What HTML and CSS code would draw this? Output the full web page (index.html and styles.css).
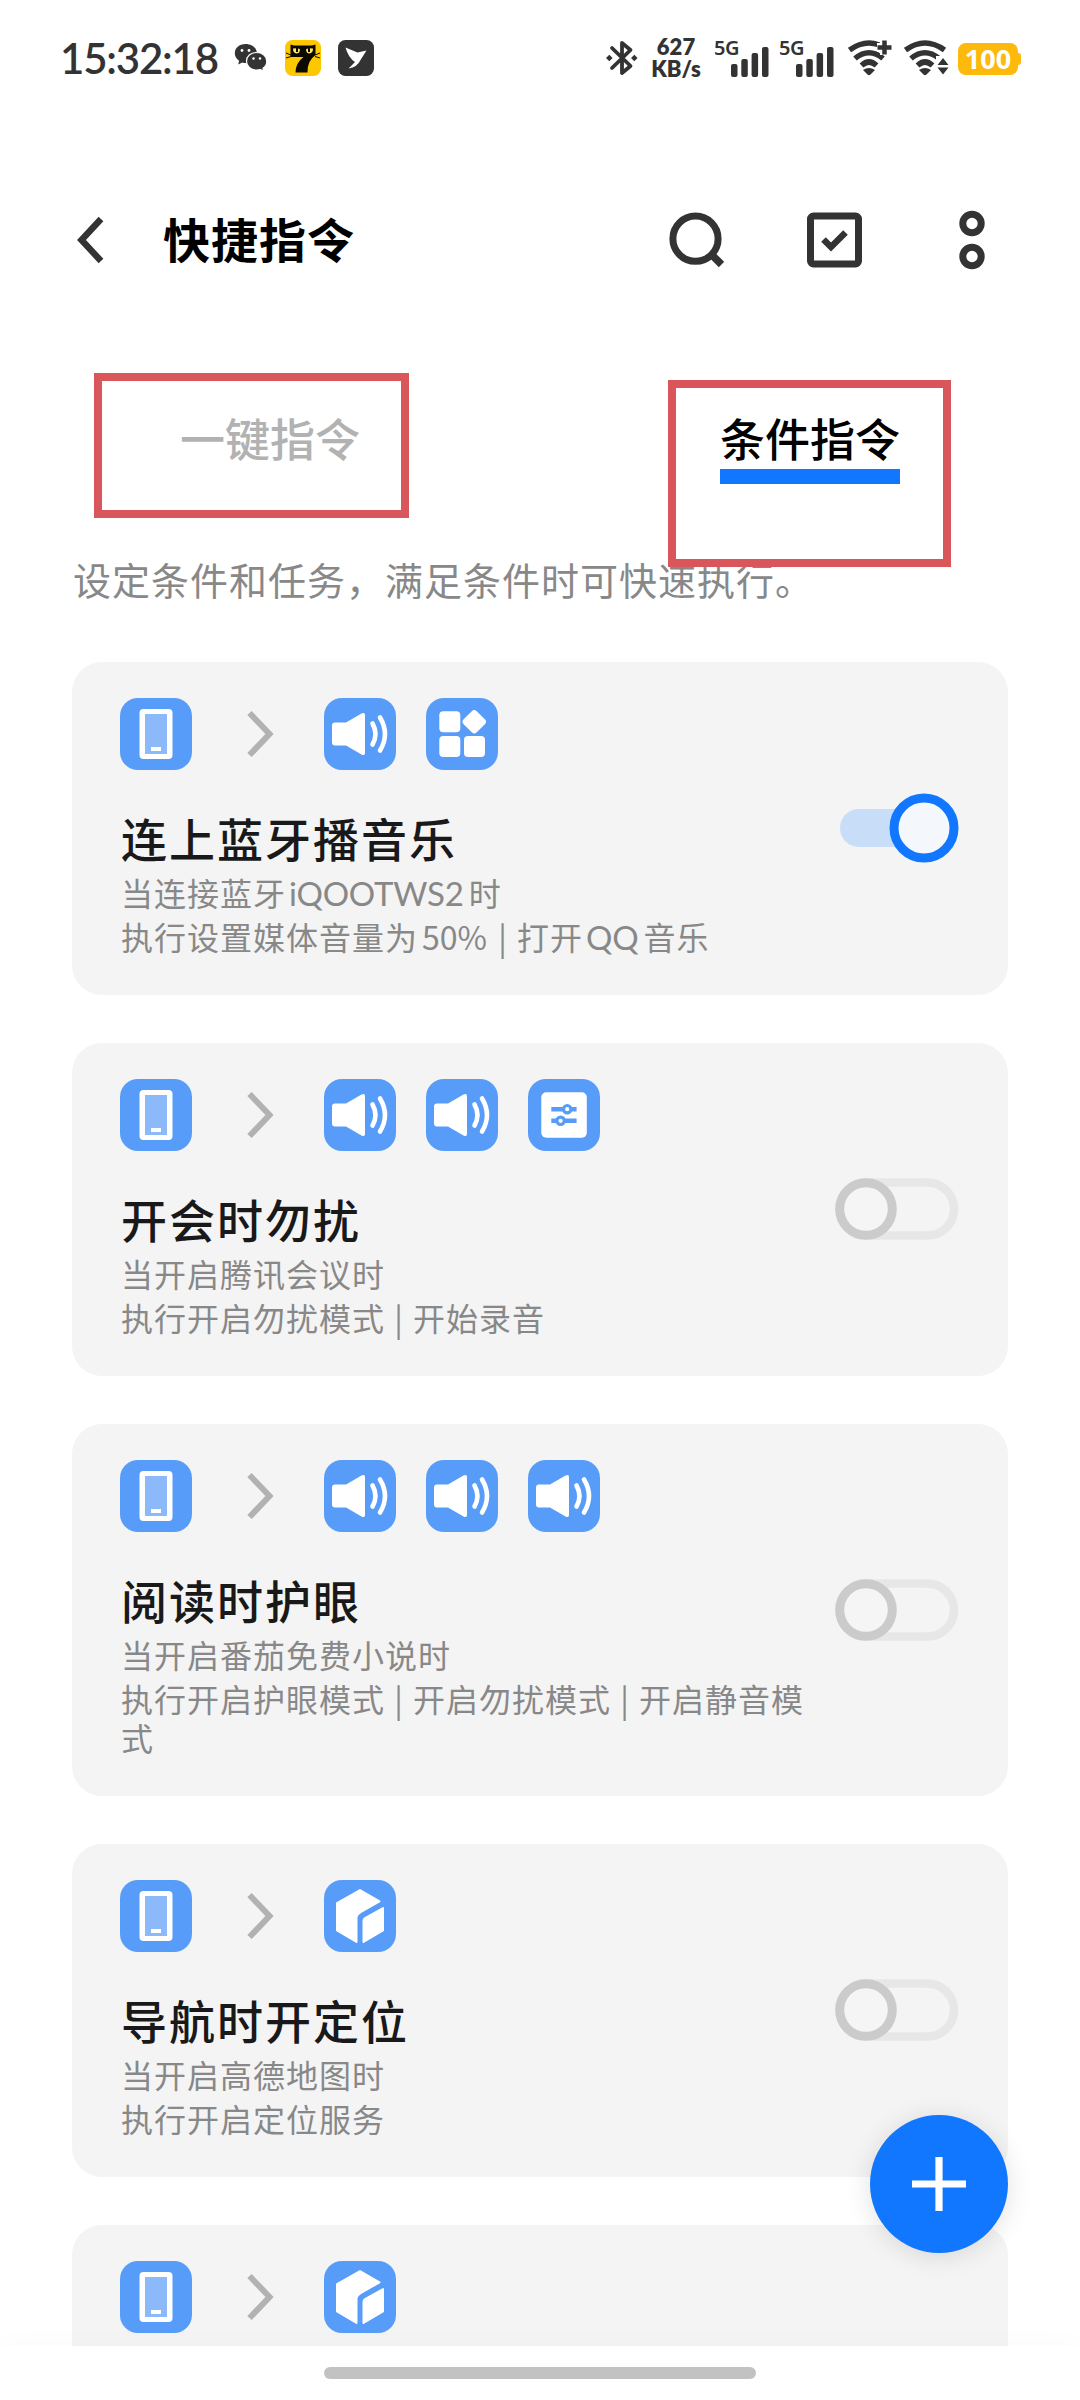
FILE: index.html
```html
<!DOCTYPE html>
<html lang="zh-CN">
<head>
<meta charset="utf-8">
<title>快捷指令</title>
<link rel="stylesheet" href="styles.css">
</head>
<body>
<svg class="defs" width="0" height="0" aria-hidden="true">
  <symbol id="phone" viewBox="0 0 72 72">
    <rect x="19.500" y="11" width="33" height="50" rx="4" fill="#fff"/>
    <rect x="25" y="16" width="22" height="40" fill="#8bb9fa"/>
    <rect x="31" y="49" width="10" height="4" fill="#fff"/>
  </symbol>
  <symbol id="arrow" viewBox="0 0 28 48">
    <path d="M3.500 3 23.500 24 3.500 45" fill="none" stroke="#b2b2b2" stroke-width="6"/>
  </symbol>
  <symbol id="speaker" viewBox="0 0 72 72">
    <path d="M11 24.500H22L37.500 15.500Q41 13.800 41 17V55Q41 58.200 37.500 56.500L22 47.500H11Q8 47.500 8 44.500V27.500Q8 24.500 11 24.500Z" fill="#fff"/>
    <path d="M48.500 25.500Q54.500 36 48.500 46.500M56 19.500Q66 36 56 52.500" fill="none" stroke="#fff" stroke-width="4.600" stroke-linecap="round"/>
  </symbol>
  <symbol id="apps" viewBox="0 0 72 72">
    <g fill="#fff"><rect x="13.300" y="13.300" width="21" height="21" rx="4"/><rect x="13.300" y="38" width="21" height="21" rx="4"/><rect x="38" y="38" width="21" height="21" rx="4"/><rect x="39" y="14.500" width="18.500" height="18.500" rx="3.500" transform="rotate(45 48.250 23.750)"/></g>
  </symbol>
  <symbol id="sliders" viewBox="0 0 72 72">
    <rect x="13.300" y="13.300" width="45.500" height="45.500" rx="5" fill="#fff"/>
    <path d="M23.300 30.200H48.600M23.300 41.800H48.600" stroke="#589cf9" stroke-width="4.400"/>
    <circle cx="39.200" cy="30.200" r="3.700" fill="#fff" stroke="#589cf9" stroke-width="3.200"/><circle cx="32.600" cy="41.800" r="3.700" fill="#fff" stroke="#589cf9" stroke-width="3.200"/>
  </symbol>
  <symbol id="box" viewBox="0 0 72 72">
    <g fill="#fff" stroke="#fff" stroke-width="2" stroke-linejoin="round"><path d="M36 10 55.500 21.300 37 32Q32.500 34.500 32.500 38V62L13 50.500V23Z"/><path d="M59 28V50.500L39.500 62V41Q39.500 39 41 38Z"/></g>
  </symbol>
  <symbol id="off" viewBox="0 0 124 70">
    <rect x="4.500" y="8.500" width="114.500" height="53" rx="26.500" fill="none" stroke="#e7e7e7" stroke-width="8.500"/>
    <circle cx="31" cy="35" r="26.300" fill="#f5f5f5" stroke="#cbcbcb" stroke-width="9"/>
  </symbol>
  <symbol id="on" viewBox="0 0 124 70">
    <rect x="5" y="16" width="110" height="38" rx="19" fill="#c8ddf7"/>
    <circle cx="89" cy="35" r="30" fill="#f4f8fd" stroke="#1177ff" stroke-width="9"/>
  </symbol>
  <symbol id="signal" viewBox="0 0 38 30">
    <g fill="#333"><rect x="0" y="17" width="6.500" height="13" rx="2"/><rect x="10.300" y="12" width="6.500" height="18" rx="2"/><rect x="20.600" y="6" width="6.500" height="24" rx="2"/><rect x="31" y="0" width="6.500" height="30" rx="2"/></g>
  </symbol>
  <symbol id="wifi" viewBox="0 0 44 36">
    <path d="M1.500 10Q21 -4 40.500 10M7 18.500Q21 7 35 18.500M13.500 25.500Q21 18.500 28.500 25.500" fill="none" stroke="#333" stroke-width="5.500"/>
    <path d="M15 30Q21 26 27 30L22.500 34.500Q21 36 19.500 34.500Z" fill="#333"/>
  </symbol>
</svg>

<div class="status">
  <span class="clock">15:32:18</span>
  <svg class="wechat" width="34" height="30" viewBox="0 0 34 30">
    <path d="M11.500 1C5.200 1 .8 5 .8 10.300c0 3.200 1.700 5.700 4.300 7.400L4.200 21.500 8.300 19.500Q10 20 12 20C18.500 20 23 16 23 10.500S18 1 11.500 1Z" fill="#333"/>
    <path d="M22.500 9.500C16.500 9.500 12.500 13.300 12.500 18.300S16.700 27 22.500 27Q24.500 27 26.200 26.500L29.700 28.300 29 25.200C31.500 23.600 32.800 21.200 32.800 18.300 32.800 13.300 28.500 9.500 22.500 9.500Z" fill="#333" stroke="#fff" stroke-width="1.200"/>
    <g fill="#fff"><circle cx="8" cy="7.500" r="1.400"/><circle cx="15" cy="7.500" r="1.400"/><circle cx="19.500" cy="15.500" r="1.200"/><circle cx="26" cy="15.500" r="1.200"/></g>
  </svg>
  <svg class="cat" width="36" height="36" viewBox="0 0 36 36">
    <rect width="36" height="36" rx="7.500" fill="#fdc800"/>
    <path d="M5.500 4.500 9 5.500H27L30.500 4.500V15Q22 21 22.500 32.500H10.500Q10.500 23 18.500 17H5.500Z" fill="#0b0900"/>
    <path d="M1 13 6 15M1 18 6 16.500M35 13 30 15M35 18 30 16.500" stroke="#0b0900"/>
    <path d="M8 8.500Q15 7.500 15 10 14.500 13.500 11.500 13.500 8 13 8 8.500ZM28 8.500Q21 7.500 21 10 21.500 13.500 24.500 13.500 28 13 28 8.500Z" fill="#ffe36a"/>
    <path d="M12 8V12M24 8V12" stroke="#0b0900" stroke-width="2"/>
  </svg>
  <svg class="bird" width="36" height="36" viewBox="0 0 36 36">
    <rect width="36" height="36" rx="7.500" fill="#333"/>
    <path d="M7.500 7.500 19.500 12.500 28.500 10.500 22.500 20Q19.500 27 10.500 28.500L17 22Q10.500 18 7.500 7.500Z" fill="#fff"/>
  </svg>
  <svg class="bluetooth" width="32" height="36" viewBox="0 0 32 36">
    <path d="M6 8 24.500 26 16 33V3L24.500 10 6 28" fill="none" stroke="#333" stroke-width="3.800" stroke-linejoin="round" stroke-linecap="round"/>
    <path d="M0 18 3.300 14.700 6.600 18 3.300 21.300ZM25 18 28.300 14.700 31.600 18 28.300 21.300Z" fill="#333"/>
  </svg>
  <div class="speed"><span>627</span><span>KB/s</span></div>
  <div class="cell"><span>5G</span><svg width="38" height="30"><use href="#signal"/></svg></div>
  <div class="cell"><span>5G</span><svg width="38" height="30"><use href="#signal"/></svg></div>
  <svg class="wifi-plus" width="44" height="36" viewBox="0 0 44 36">
    <use href="#wifi" width="44" height="36"/>
    <path d="M36.500 0V15M29 7.500H44" stroke="#fff" stroke-width="9"/>
    <path d="M36.500 .5V14.500M29.500 7.500H43.500" stroke="#333" stroke-width="4.500"/>
  </svg>
  <svg class="wifi-data" width="46" height="36" viewBox="0 0 46 36">
    <use href="#wifi" width="44" height="36"/>
    <path d="M32 16H46V36H32Z" fill="#fff"/>
    <path d="M39 18 44.500 25H33.500ZM39 34.500 44.500 27.500H33.500Z" fill="#333"/>
  </svg>
  <div class="battery">100</div>
</div>

<header class="header">
  <svg class="back" width="30" height="50" viewBox="0 0 30 50"><path d="M25 4 5.500 25 25 46" fill="none" stroke="#333" stroke-width="6.500"/></svg>
  <h1>快捷指令</h1>
  <div class="actions">
    <svg width="60" height="60" viewBox="0 0 60 60"><circle cx="30.500" cy="28.700" r="22.600" fill="none" stroke="#333" stroke-width="7"/><path d="M45 43 56.500 54.500" stroke="#333" stroke-width="7.500"/></svg>
    <svg width="60" height="60" viewBox="0 0 60 60"><rect x="6.500" y="6" width="48" height="48" rx="3" fill="none" stroke="#333" stroke-width="7"/><path d="M19.500 29.500 27 37 41.500 22.500" fill="none" stroke="#333" stroke-width="6.500"/></svg>
    <svg width="60" height="60" viewBox="0 0 60 60"><g fill="none" stroke="#333" stroke-width="7"><circle cx="30" cy="13.500" r="9.200"/><circle cx="30" cy="46.500" r="9.200"/></g></svg>
  </div>
</header>

<nav class="tabs">
  <span class="tab">一键指令</span>
  <span class="tab active">条件指令</span>
</nav>
<p class="hint">设定条件和任务，满足条件时可快速执行。</p>
<div class="mark mark-left"></div>
<div class="mark mark-right"></div>

<main class="list">
  <section class="card">
    <div class="body">
      <div class="flow"><svg class="tile"><use href="#phone"/></svg><svg class="arrow"><use href="#arrow"/></svg><svg class="tile"><use href="#speaker"/></svg><svg class="tile"><use href="#apps"/></svg></div>
      <h2>连上蓝牙播音乐</h2>
      <p>当连接蓝牙<span class="latin">iQOOTWS2</span>时</p>
      <p>执行设置媒体音量为<span class="num">50%</span> | 打开<span class="latin">QQ</span>音乐</p>
    </div>
    <svg class="toggle"><use href="#on"/></svg>
  </section>
  <section class="card">
    <div class="body">
      <div class="flow"><svg class="tile"><use href="#phone"/></svg><svg class="arrow"><use href="#arrow"/></svg><svg class="tile"><use href="#speaker"/></svg><svg class="tile"><use href="#speaker"/></svg><svg class="tile"><use href="#sliders"/></svg></div>
      <h2>开会时勿扰</h2>
      <p>当开启腾讯会议时</p>
      <p>执行开启勿扰模式 | 开始录音</p>
    </div>
    <svg class="toggle"><use href="#off"/></svg>
  </section>
  <section class="card">
    <div class="body">
      <div class="flow"><svg class="tile"><use href="#phone"/></svg><svg class="arrow"><use href="#arrow"/></svg><svg class="tile"><use href="#speaker"/></svg><svg class="tile"><use href="#speaker"/></svg><svg class="tile"><use href="#speaker"/></svg></div>
      <h2>阅读时护眼</h2>
      <p>当开启番茄免费小说时</p>
      <p>执行开启护眼模式 | 开启勿扰模式 | 开启静音模式</p>
    </div>
    <svg class="toggle"><use href="#off"/></svg>
  </section>
  <section class="card">
    <div class="body">
      <div class="flow"><svg class="tile"><use href="#phone"/></svg><svg class="arrow"><use href="#arrow"/></svg><svg class="tile"><use href="#box"/></svg></div>
      <h2>导航时开定位</h2>
      <p>当开启高德地图时</p>
      <p>执行开启定位服务</p>
    </div>
    <svg class="toggle"><use href="#off"/></svg>
  </section>
  <section class="card last">
    <div class="body">
      <div class="flow"><svg class="tile"><use href="#phone"/></svg><svg class="arrow"><use href="#arrow"/></svg><svg class="tile"><use href="#box"/></svg></div>
    </div>
  </section>
</main>

<button class="fab" aria-label="添加"><svg width="54" height="54" viewBox="0 0 54 54"><path d="M27 0V54M0 27H54" stroke="#fff" stroke-width="7.200"/></svg></button>
<footer class="gesture"><div class="pill"></div></footer>
</body>
</html>
```
FILE: styles.css
```css
* { box-sizing: border-box; }

body {
  margin: 0;
  width: 1080px;
  height: 2400px;
  position: relative;
  overflow: hidden;
  display: flex;
  flex-direction: column;
  background: #fff;
  color: #000;
  font-family: "Noto Sans CJK SC", sans-serif;
}

h1, h2, p { margin: 0; }
svg { display: block; flex: none; }
.defs { position: absolute; }

/* Status bar */
.status {
  height: 115px;
  padding: 0 60px;
  display: flex;
  align-items: center;
  flex: none;
  color: #333;
  font-family: Lato, sans-serif;
}
.clock {
  width: 174px;
  font-size: 42px;
  font-weight: 600;
  line-height: 50px;
  letter-spacing: -1.2px;
  white-space: nowrap;
}
.cat { margin-left: 17px; }
.bird { margin-left: 17px; }
.bluetooth { margin-left: 232px; }
.speed {
  width: 54px;
  margin-left: 11px;
  margin-top: 1px;
  display: flex;
  flex-direction: column;
  align-items: center;
  font-size: 22px;
  font-weight: 800;
  line-height: 22px;
}
.cell {
  width: 55px;
  height: 38px;
  margin-left: 10px;
  position: relative;
  display: flex;
  justify-content: flex-end;
  align-items: flex-end;
}
.speed + .cell { margin-left: 11px; }
.cell span {
  position: absolute;
  left: 0;
  top: 0;
  font: 600 20px/17px "Noto Sans", sans-serif;
  letter-spacing: -0.5px;
}
.wifi-plus { margin-left: 14px; }
.wifi-data { margin-left: 12px; }
.battery {
  width: 60px;
  height: 32px;
  margin-left: 8px;
  margin-top: 3px;
  border-radius: 8px;
  position: relative;
  background: #fdb90c;
  color: #fff;
  font: 700 27px/32px "Noto Sans", sans-serif;
  text-align: center;
}
.battery::after {
  content: "";
  position: absolute;
  left: 59px;
  top: 10px;
  width: 4px;
  height: 12px;
  border-radius: 0 3px 3px 0;
  background: #fdb90c;
}

/* Title bar */
.header {
  height: 250px;
  padding: 0 78px 0 76px;
  display: flex;
  align-items: center;
  flex: none;
}
h1 {
  margin: -5px 0 0 57px;
  font-size: 47px;
  line-height: 62px;
  font-weight: 700;
  letter-spacing: 1px;
}
.actions { margin-left: auto; display: flex; gap: 78.5px; }

/* Tabs */
.tabs {
  height: 144px;
  padding-top: 42px;
  display: grid;
  grid-template-columns: 1fr 1fr;
  justify-items: center;
  align-items: start;
  flex: none;
}
.tab {
  font-size: 45px;
  line-height: 62px;
  font-weight: 500;
  color: #b2b2b2;
}
.tab.active {
  border-bottom: 15px solid #1177ff;
  color: #000;
}
.hint {
  height: 153px;
  padding: 43px 0 0 73px;
  font-size: 38px;
  letter-spacing: 1px;
  line-height: 54px;
  color: #888;
  flex: none;
}

/* Red frames drawn over the two tabs */
.mark { position: absolute; border: 8px solid #d9565b; }
.mark-left { left: 94px; top: 372.5px; width: 315px; height: 145px; }
.mark-right { left: 668px; top: 380px; width: 283px; height: 187px; }

/* Command cards */
.list {
  height: 1684px;
  padding: 0 72px;
  overflow: hidden;
  display: flex;
  flex-direction: column;
  gap: 48px;
  flex: none;
}
.card {
  padding: 36px 49px 39px 48px;
  border-radius: 30px;
  background: #f4f4f4;
  display: flex;
  justify-content: space-between;
  flex: none;
}
.card.last { height: 333px; }
.body { width: 700px; }
.flow { display: flex; align-items: center; gap: 30px; height: 72px; }
.tile { width: 72px; height: 72px; border-radius: 18px; background: #589cf9; }
.arrow { width: 28px; height: 48px; margin: 0 20px 0 24px; }
h2 {
  margin: 36px 0 0 1px;
  font-size: 46px;
  line-height: 62px;
  font-weight: 500;
  letter-spacing: 2px;
  color: #191919;
}
.body p {
  margin: 5px 0 0 1px;
  font-size: 32px;
  line-height: 39px;
  letter-spacing: 1px;
  word-spacing: 1px;
  color: #888;
}
.latin {
  margin: 0 5px 0 3px;
  font-family: Lato, sans-serif;
  font-size: 33px;
  line-height: 1;
  letter-spacing: -0.2px;
}
.num { margin: 0 2px 0 4px; letter-spacing: 0; }
.toggle { width: 124px; height: 70px; align-self: center; margin-top: 2px; }

/* Floating button */
.fab {
  position: absolute;
  left: 870px;
  top: 2115px;
  width: 138px;
  height: 138px;
  padding: 0;
  border: 0;
  border-radius: 50%;
  background: #1177ff;
  box-shadow: 0 3px 26px rgba(0, 0, 0, 0.12);
  display: flex;
  align-items: center;
  justify-content: center;
}

/* Gesture bar */
.gesture {
  height: 54px;
  display: flex;
  align-items: center;
  justify-content: center;
  flex: none;
  background: #fff;
  box-shadow: 0 -3px 28px rgba(0, 0, 0, 0.02);
}
.pill { width: 432px; height: 12px; border-radius: 6px; background: #c2c2c2; }
```
